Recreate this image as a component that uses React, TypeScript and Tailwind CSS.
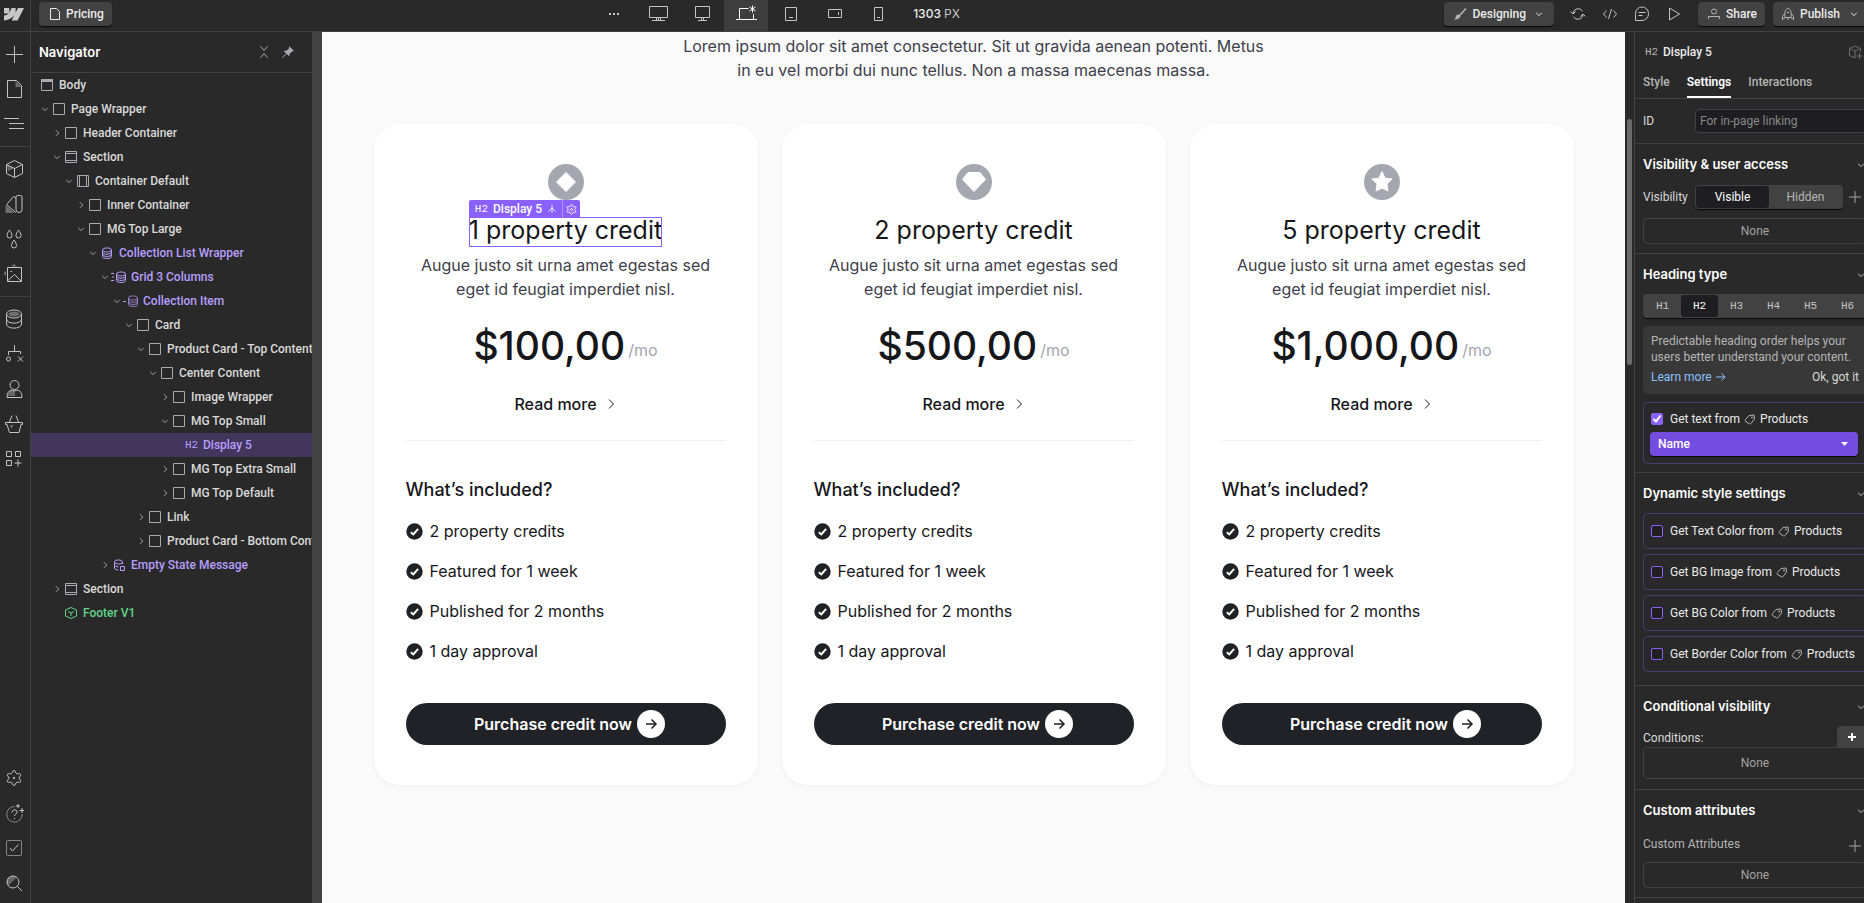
import React from 'react';
import clsx from 'clsx';

type IconProps = { size?: number; className?: string; children: React.ReactNode };

const Icon: React.FC<IconProps> = ({ size = 20, className, children }) => (
  <svg
    width={size}
    height={size}
    viewBox={`0 0 ${size} ${size}`}
    fill="none"
    stroke="currentColor"
    aria-hidden="true"
    className={clsx('shrink-0', className)}
  >
    {children}
  </svg>
);

const ChevronDown = ({ className }: { className?: string }) => (
  <Icon size={12} className={className}>
    <path d="M3.2 4.8 6 7.6l2.8-2.8" />
  </Icon>
);

const ChevronRight = ({ className }: { className?: string }) => (
  <Icon size={12} className={className}>
    <path d="M5 3.2 7.8 6 5 8.8" />
  </Icon>
);

const PageIcon = () => (
  <Icon size={16}>
    <path d="M3.5 2.5h6l3 3v8h-9z" />
  </Icon>
);

const GearPath = 'M10 2.5c1.6 0 1.5 2.6 2.6 3.2 1.1.6 3.2-.8 4 .6.8 1.4-1.6 2.4-1.6 3.7s2.4 2.3 1.6 3.7-2.9 0-4 .6c-1.1.6-1 3.2-2.6 3.2s-1.5-2.6-2.6-3.2c-1.1-.6-3.2.8-4-.6S5 11.3 5 10 2.6 7.7 3.4 6.3s2.9 0 4-.6S8.4 2.5 10 2.5z';

const railTop = [
  {
    label: 'Add elements',
    icon: <path d="M10.5 2v17M2 10.5h17" />,
  },
  {
    label: 'Pages',
    icon: (
      <>
        <path d="M3.5 1.5h9l5 5v12h-14z" />
        <path d="M11.5 2v6h6z" fill="currentColor" opacity=".45" stroke="none" />
      </>
    ),
  },
  {
    label: 'Navigator',
    icon: <path d="M0 4.5h15M5 9.5h15M5 14.5h15" />,
  },
];

const railMiddle = [
  {
    label: 'Components',
    icon: (
      <>
        <path d="m10.5 1.5 8 4v9l-8 4-8-4v-9zM2.5 5.5l8 4 8-4M10.5 9.5v9" />
        <path d="m3 6 7 3.5L4 12z" fill="currentColor" opacity=".4" stroke="none" />
      </>
    ),
  },
  {
    label: 'Variables',
    icon: (
      <>
        <path d="M13.5 1.5h3A1.5 1.5 0 0 1 18 3v12.5a3 3 0 0 1-6 0V3a1.5 1.5 0 0 1 1.5-1.5zM12 4 9.500 2.500l-6 7a1.5 1.5 0 0 0 0 2l8.500 7" />
        <path d="M1.5 10.500V19h9z" fill="currentColor" opacity=".45" stroke="none" />
      </>
    ),
  },
  {
    label: 'Style manager',
    icon: (
      <path d="M5.5 1c1.5 2.5 2.5 3.7 2.5 5.5a2.5 2.5 0 0 1-5 0C3 4.7 4 3.5 5.5 1zM14.5 1C16 3.5 17 4.7 17 6.5a2.5 2.5 0 0 1-5 0c0-1.8 1-3 2.5-5.5zM10 11c1.5 2.5 2.5 3.7 2.5 5.500a2.5 2.5 0 0 1-5 0c0-1.800 1-3 2.500-5.500z" />
    ),
  },
  {
    label: 'Assets',
    icon: (
      <>
        <path d="M3.5 3.5h14v14h-14zM4 16.5l6.5-6 6.5 6.5M6.5 7.5H8" />
        <path d="M7 2.5 10 0l3 2.5zM2 7v5L-.5 9.5z" fill="currentColor" opacity=".5" stroke="none" />
      </>
    ),
  },
];

const railLower = [
  {
    label: 'CMS',
    icon: (
      <>
        <ellipse cx="10" cy="5" rx="7.5" ry="4" />
        <ellipse cx="10" cy="5" rx="5.5" ry="2.5" fill="currentColor" opacity=".45" stroke="none" />
        <path d="M2.5 5v10c0 5.5 15 5.5 15 0V5M2.5 10c0 5.5 15 5.5 15 0" />
      </>
    ),
  },
  {
    label: 'Logic',
    icon: (
      <>
        <path d="M10.5 1v6M4.5 11V7.5h12V10M14 12.500l5 5M19 12.500l-5 5" />
        <circle cx="4.5" cy="15" r="2" />
      </>
    ),
  },
  {
    label: 'Users',
    icon: (
      <>
        <circle cx="10.5" cy="6" r="4.5" />
        <path d="M3 18.5c0-4 1.5-6.5 4-7.5 1.5 1 5.5 1 7 0 2.5 1 4 3.5 4 7.5z" />
        <path d="M4 17c0-3 1-4.5 3-5.5l4 .5v5z" fill="currentColor" opacity=".4" stroke="none" />
      </>
    ),
  },
  {
    label: 'Ecommerce',
    icon: (
      <>
        <path d="M1.5 8.500h17v2H17l-2 8H5.5l-2.500-8H1.5zM5.5 8 8 1.500M14.500 8 12 1.500" />
        <path d="M6 11h4l-3 4z" fill="currentColor" opacity=".4" stroke="none" />
      </>
    ),
  },
  {
    label: 'Apps',
    icon: <path d="M2.5 2.5h5v5h-5zM11.5 2.5h5v5h-5zM2.5 11.5h5v5h-5zM14 10.5v7M10.5 14h7" />,
  },
];

const railBottom = [
  {
    label: 'Site settings',
    icon: (
      <>
        <path d={GearPath} />
        <circle cx="10" cy="10" r=".7" fill="currentColor" />
      </>
    ),
  },
  {
    label: 'Help',
    icon: (
      <>
        <path d="M11 3.500A7.800 7.800 0 1 0 18.300 11" opacity=".6" />
        <path d="M8 9.500c0-3.500 5-3.500 5-.5 0 2-2.500 2-2.500 4M10.500 15v1.200M14 1v4M12 3h4M18 5v5M15.500 7.500h5" />
      </>
    ),
  },
  {
    label: 'Audit',
    icon: (
      <>
        <rect x="2.5" y="2.5" width="15" height="15" rx="1" opacity=".6" />
        <path d="m6 10 2.500 3 6-6.500" />
      </>
    ),
  },
  {
    label: 'Search',
    icon: (
      <>
        <circle cx="9" cy="9" r="6" />
        <path d="m13.500 13.500 4.500 4.500" />
        <path d="M4.500 12.500a5.500 5.500 0 0 1 8-8z" fill="currentColor" opacity=".4" stroke="none" />
      </>
    ),
  },
];

const RailGroup = ({ items }: { items: { label: string; icon: React.ReactNode }[] }) => (
  <>
    {items.map(item => (
      <button
        key={item.label}
        type="button"
        title={item.label}
        className="flex h-[35px] w-full items-center justify-center pr-[2px] text-[#c4c4c4]"
      >
        <Icon>{item.icon}</Icon>
      </button>
    ))}
  </>
);

type NodeKind =
  | 'body'
  | 'box'
  | 'section'
  | 'container'
  | 'list'
  | 'grid'
  | 'item'
  | 'heading'
  | 'empty'
  | 'component';

interface TreeNode {
  label: string;
  level: number;
  kind: NodeKind;
  state?: 'open' | 'closed';
}

const tree: TreeNode[] = [
  { label: 'Body', level: 0, kind: 'body' },
  { label: 'Page Wrapper', level: 1, kind: 'box', state: 'open' },
  { label: 'Header Container', level: 2, kind: 'box', state: 'closed' },
  { label: 'Section', level: 2, kind: 'section', state: 'open' },
  { label: 'Container Default', level: 3, kind: 'container', state: 'open' },
  { label: 'Inner Container', level: 4, kind: 'box', state: 'closed' },
  { label: 'MG Top Large', level: 4, kind: 'box', state: 'open' },
  { label: 'Collection List Wrapper', level: 5, kind: 'list', state: 'open' },
  { label: 'Grid 3 Columns', level: 6, kind: 'grid', state: 'open' },
  { label: 'Collection Item', level: 7, kind: 'item', state: 'open' },
  { label: 'Card', level: 8, kind: 'box', state: 'open' },
  { label: 'Product Card - Top Content', level: 9, kind: 'box', state: 'open' },
  { label: 'Center Content', level: 10, kind: 'box', state: 'open' },
  { label: 'Image Wrapper', level: 11, kind: 'box', state: 'closed' },
  { label: 'MG Top Small', level: 11, kind: 'box', state: 'open' },
  { label: 'Display 5', level: 12, kind: 'heading' },
  { label: 'MG Top Extra Small', level: 11, kind: 'box', state: 'closed' },
  { label: 'MG Top Default', level: 11, kind: 'box', state: 'closed' },
  { label: 'Link', level: 9, kind: 'box', state: 'closed' },
  { label: 'Product Card - Bottom Content', level: 9, kind: 'box', state: 'closed' },
  { label: 'Empty State Message', level: 6, kind: 'empty', state: 'closed' },
  { label: 'Section', level: 2, kind: 'section', state: 'closed' },
  { label: 'Footer V1', level: 2, kind: 'component' },
];

const database = (
  <path d="M1.500 3c0-2.700 9-2.700 9 0s-9 2.700-9 0v6.500c0 2.700 9 2.700 9 0V3M1.500 5.200c0 2.700 9 2.700 9 0M1.500 7.400c0 2.700 9 2.700 9 0" />
);

const nodeIcons: Record<Exclude<NodeKind, 'heading'>, React.ReactNode> = {
  body: (
    <>
      <path d="M.5.5h11v11H.5z" />
      <path d="M0 0h12v3H0z" fill="currentColor" stroke="none" />
    </>
  ),
  box: <path d="M.5.5h11v11H.5z" />,
  section: <path d="M.5.5h11v11H.5zM.5 2.500h11M.5 9.500h11" />,
  container: <path d="M.5.5h11v11H.5zM2.500.5v11M9.500.5v11" />,
  list: database,
  grid: (
    <>
      <g transform="translate(2)">{database}</g>
      <path d="M-2 2.500h3M-1 6h2M-2 9.500h3" />
    </>
  ),
  item: (
    <>
      <g transform="translate(2)" opacity=".7">
        {database}
      </g>
      <path d="M-2 6.500h3" />
    </>
  ),
  empty: (
    <>
      <path d="M1.500 3c0-2.700 8-2.700 8 0s-8 2.700-8 0v6c0 1.500 2 2 4 2M9.500 3v2M1.500 6c0 1.200 2 1.800 4 1.800" />
      <path d="M7.500 7.500h4v4h-4z" />
    </>
  ),
  component: <path d="m6 .5 5.500 2.500v6L6 11.500.5 9V3zM3 4.500 6 6l3-1.500M6 6v3" />,
};

const kindColor = (kind: NodeKind) => {
  if (kind === 'component') return 'text-[#63d489]';
  if (kind === 'box' || kind === 'body' || kind === 'section' || kind === 'container') return 'text-[#d9d9d9]';
  return 'text-[#b89eff]';
};

const TreeRow = ({ node }: { node: TreeNode }) => (
  <li className={node.kind === 'heading' ? 'bg-[#43365c]' : undefined}>
    <button
      type="button"
      className={clsx('flex h-6 w-full items-center text-xs font-medium', kindColor(node.kind))}
      style={{ paddingLeft: node.level * 12 - (node.level ? 4 : -10) }}
    >
      {node.level > 0 && (
        <span className="flex h-3 w-[14px] shrink-0 text-[#a3a3a3]">
          {node.state === 'open' && <ChevronDown />}
          {node.state === 'closed' && <ChevronRight />}
        </span>
      )}
      {node.kind === 'heading' ? (
        <span className="w-[18px] shrink-0 text-left font-['Liberation_Mono',monospace] text-[11px] font-normal">H2</span>
      ) : (
        <Icon
          size={12}
          className={clsx('mr-[6px] overflow-visible', kindColor(node.kind) === 'text-[#d9d9d9]' && 'text-[#a9a9b0]')}
        >
          {nodeIcons[node.kind]}
        </Icon>
      )}
      <span className="whitespace-nowrap">{node.label}</span>
    </button>
  </li>
);

const Navigator = () => (
  <nav className="flex w-[281px] shrink-0 flex-col overflow-hidden" aria-label="Navigator">
    <div className="flex h-[41px] items-center border-b border-[#424242] px-2">
      <h2 className="flex-1 pt-px font-['Inter',sans-serif] text-[13px] font-semibold text-white">Navigator</h2>
      <button type="button" title="Collapse all" className="mr-2 text-[#b5b5b5]">
        <Icon size={16}>
          <path d="m4.500 2.500 3.500 4 3.500-4M4.500 13.500l3.500-4 3.500 4" />
        </Icon>
      </button>
      <button type="button" title="Pin" className="mr-2 text-[#a9a9b0]">
        <Icon size={16}>
          <path d="M9 2 14 7l-2 .5L9.500 10v2.500l-6-5.500L6.500 6.500 9 4.500z" fill="currentColor" stroke="none" />
          <path d="m6.500 9.500-4 4" />
        </Icon>
      </button>
    </div>
    <ul>
      {tree.map((node, i) => (
        <TreeRow key={i} node={node} />
      ))}
    </ul>
  </nav>
);

const devices = [
  {
    label: 'Large desktop',
    icon: <path d="M1.500 3.500h18v11h-18zM8.500 14.500v3M12.500 14.500v3M10.500 14.500v3M4 17.500h13" />,
  },
  {
    label: 'Desktop',
    icon: <path d="M3.500 3.500h14v11h-14zM9.500 14.500v3M11.500 14.500v3M6 17.500h9" />,
  },
  {
    label: 'Base breakpoint',
    icon: (
      <>
        <path d="M3.500 16V5.500h9M17.500 11v5M0 16.500h21" />
        <path d="M16.500 2.500v7M13.500 4l6 4M19.500 4l-6 4" />
      </>
    ),
  },
  {
    label: 'Tablet',
    icon: <path d="M5.500 4.500h11v13h-11zM9 14.500h4" />,
  },
  {
    label: 'Mobile landscape',
    icon: <path d="M4.500 6.500h13v8h-13zM14.500 9v3" />,
  },
  {
    label: 'Mobile portrait',
    icon: <path d="M6.500 4.500h8v13h-8zM9 14.500h3" />,
  },
];

const barButton =
  'flex h-6 items-center rounded-[4px] bg-[#424242] text-xs font-medium text-[#ebebeb] shadow-[0_1px_1px_rgba(0,0,0,0.8)]';

const TopBar = () => (
  <header className="flex h-8 shrink-0 items-start justify-between overflow-hidden border-b border-[#424242]">
    <div className="flex">
      <a
        href="#"
        aria-label="Dashboard"
        className="flex h-[31px] w-[31px] shrink-0 items-center border-r border-[#424242] pb-[3px] pl-1 text-[#c8c8c8]"
      >
        <svg width="20" height="13" viewBox="0 0 20 13" fill="currentColor" aria-hidden="true">
          <path d="M20 0 13.600 12.500h-6l2.700-5.200h-.1C8 10.200 4.600 12.100 0 12.500V7.400s3-.2 4.700-2H0V0h5.300v4.400h.1L7.600 0h4v4.400h.1L14 0z" />
        </svg>
      </a>
      <div className="flex pt-[2px] pl-2">
        <button type="button" className={clsx(barButton, 'gap-[3px] px-2')}>
          <PageIcon />
          Pricing
        </button>
      </div>
    </div>
    <div className="flex h-[31px] items-center">
      <button
        type="button"
        title="More breakpoints"
        className="flex h-full w-11 items-center justify-center pb-1 text-[#c4c4c4]"
      >
        <Icon size={12}>
          <path d="M1 6h2M5 6h2M9 6h2" strokeWidth="2" />
        </Icon>
      </button>
      {devices.map(device => (
        <button
          key={device.label}
          type="button"
          title={device.label}
          className={clsx(
            'flex h-full w-11 items-center justify-center pb-1',
            device.label === 'Base breakpoint' ? 'bg-[#3d3d3d] text-white' : 'text-[#c4c4c4]'
          )}
        >
          <Icon size={21}>{device.icon}</Icon>
        </button>
      ))}
      <p className="w-16 pb-1 pl-[13px] font-['Inter',sans-serif] text-xs font-medium whitespace-nowrap text-[#ebebeb]">
        1303 <span className="font-normal text-[#c4c4c4]">PX</span>
      </p>
    </div>
    <div className="flex pt-[2px]">
      <button type="button" className={clsx(barButton, 'mr-2 pr-[9px] pl-2')}>
        <Icon size={16} className="mr-1 text-[#b5b5b5]">
          <path d="m14 2.500-6 6.500" strokeWidth="1.500" />
          <path d="M8.500 9.500C8.500 12 6 13.500 2 13.500c1.500-1 1.500-2 2-3.500s3.500-2 4.500-.5z" fill="currentColor" stroke="none" />
        </Icon>
        Designing
        <ChevronDown className="ml-[7px]" />
      </button>
      <div className="mr-2 flex h-6 items-center text-[#c4c4c4]">
        <button type="button" title="Sync" className="flex w-8 justify-center">
          <Icon size={16}>
            <path d="M3 7.500A5.200 5.200 0 0 1 12.500 5M13 8.500A5.200 5.200 0 0 1 3.500 11M.5 5.500 3 8l2.500-2.500M10.500 10.500 13 8l2.500 2.500" />
          </Icon>
        </button>
        <button type="button" title="Export code" className="flex w-8 justify-center">
          <Icon size={16}>
            <path d="M4.500 4.500 1.500 8l3 3.500M11.500 4.500l3 3.500-3 3.500M9.500 3l-3 10" />
          </Icon>
        </button>
        <button type="button" title="Comments" className="flex w-8 justify-center">
          <Icon size={16}>
            <path d="M1.500 14.500V7.500a6.500 6.500 0 0 1 13 0 6.500 6.500 0 0 1-6.500 7zM4.500 6.500h7M4.500 9.500h4" />
          </Icon>
        </button>
        <button type="button" title="Preview" className="flex w-8 justify-center">
          <Icon size={16}>
            <path d="M3.500 2v12l10-6z" />
          </Icon>
        </button>
      </div>
      <button type="button" className={clsx(barButton, 'mr-2 gap-1 px-2')}>
        <Icon size={16} className="text-[#b5b5b5]">
          <circle cx="8" cy="5.500" r="2.500" />
          <path d="M2.500 13v-2.500h11V13" />
        </Icon>
        Share
      </button>
      <button type="button" className={clsx(barButton, 'w-[91px] gap-1 rounded-r-none pr-1 pl-[7px]')}>
        <Icon size={16} className="text-[#b5b5b5]">
          <path d="M5 11.500C4 7 5.500 3.500 8 2c2.500 1.500 4 5 3 9.500zM4.500 8 2.500 10.500v3l3-2M11.500 8l2 2.500v3l-3-2M7 6.500h2M8 11.500V14" />
        </Icon>
        Publish
        <ChevronDown className="ml-1" />
      </button>
    </div>
  </header>
);

const CardShape = ({ shape }: { shape: Plan['shape'] }) => (
  <svg width="36" height="36" viewBox="0 0 36 36" aria-hidden="true">
    <circle cx="18" cy="18" r="18" fill="#a5a6b0" />
    <g fill="#fff" stroke="#fff" strokeLinejoin="round">
      {shape === 'diamond' && <path d="m18 8.500 9.500 9.500-9.500 9.500L8.500 18z" />}
      {shape === 'gem' && <path d="M12 8.500h12l5.500 7L18 27.500 6.500 15.500z" />}
      {shape === 'star' && (
        <path d="m18 7.500 3 6.600 7.200.8-5.200 5 1 7.100-6-3-6 3 1-7.100-5.200-5 7.200-.8z" />
      )}
    </g>
  </svg>
);

interface Plan {
  name: string;
  price: string;
  shape: 'diamond' | 'gem' | 'star';
}

const plans: Plan[] = [
  { name: '1 property credit', price: '$100,00', shape: 'diamond' },
  { name: '2 property credit', price: '$500,00', shape: 'gem' },
  { name: '5 property credit', price: '$1,000,00', shape: 'star' },
];

const features = ['2 property credits', 'Featured for 1 week', 'Published for 2 months', '1 day approval'];

const SelectionTag = () => (
  <span className="absolute bottom-full -left-px flex h-[18px] items-center rounded-t-[2px] bg-[#8a61ff] font-['Roboto',sans-serif] text-xs leading-none font-medium whitespace-nowrap text-white">
    <span className="pr-[5px] pl-[6px] font-['Liberation_Mono',monospace] text-[11px] font-normal">H2</span>
    Display 5
    <Icon size={12} className="mx-1">
      <path d="M6 2v8M6 5 2.500 8.500M6 5l3.500 3.500" opacity=".85" />
    </Icon>
    <span className="flex h-full items-center border-l border-white/30 px-[2px]">
      <svg width="13" height="13" viewBox="0 0 20 20" fill="none" stroke="currentColor" strokeWidth="1.5" aria-hidden="true">
        <path d={GearPath} />
        <circle cx="10" cy="10" r="1.500" />
      </svg>
    </span>
  </span>
);

const PlanCard = ({ plan, selected }: { plan: Plan; selected: boolean }) => (
  <article className="rounded-[26px] bg-white px-8 py-10 text-[#16171a] shadow-[0_2px_6px_rgba(20,20,43,0.04)]">
    <div className="flex flex-col items-center text-center">
      <CardShape shape={plan.shape} />
      <h2 className="relative mt-[17px] pb-1 text-[25px] leading-[26px] whitespace-nowrap">
        {plan.name}
        {selected && (
          <span className="absolute inset-0 border border-[#8a61ff]">
            <SelectionTag />
          </span>
        )}
      </h2>
      <p className="mt-[6px] max-w-[310px] text-base leading-6 text-[#3d3f4a]">
        Augue justo sit urna amet egestas sed eget id feugiat imperdiet nisl.
      </p>
      <p className="mt-[21px] flex items-end gap-[3px] text-[39px] leading-[48px] font-medium">
        {plan.price}
        <span className="pb-2 text-base leading-6 font-normal text-[#a5a6b0]">/mo</span>
      </p>
      <a href="#" className="mt-[22px] flex items-center gap-2 text-base leading-6 font-medium">
        Read more
        <Icon size={12}>
          <path d="M4 1.500 8.500 6 4 10.500" />
        </Icon>
      </a>
    </div>
    <hr className="mt-6 border-[#eeeff2]" />
    <h3 className="mt-[37px] text-lg leading-6 font-medium">What’s included?</h3>
    <ul className="mt-[17px] flex flex-col gap-4">
      {features.map(feature => (
        <li key={feature} className="flex items-center gap-[7px] text-base leading-6">
          <svg width="17" height="17" viewBox="0 0 17 17" fill="none" aria-hidden="true">
            <circle cx="8.500" cy="8.500" r="8.200" fill="#212227" />
            <path d="m4.800 9.200 2.500 2.200 4.800-5.500" stroke="#fff" strokeWidth="2" />
          </svg>
          {feature}
        </li>
      ))}
    </ul>
    <button
      type="button"
      className="mt-10 flex h-[42px] w-full items-center justify-center gap-[5px] rounded-full bg-[#212227] pl-2 text-base font-semibold text-white"
    >
      Purchase credit now
      <span className="flex size-7 items-center justify-center rounded-full bg-white text-[#212227]">
        <Icon size={14}>
          <path d="M2 7h10M7.500 2.500 12 7l-4.500 4.500" strokeWidth="1.500" />
        </Icon>
      </span>
    </button>
  </article>
);

const Canvas = () => (
  <main className="min-w-0 flex-1 overflow-hidden bg-[#fafafa] px-8 pt-[2px] font-['Inter',sans-serif]">
    <p className="mx-auto max-w-[590px] text-center text-base leading-6 text-[#3d3f4a]">
      Lorem ipsum dolor sit amet consectetur. Sit ut gravida aenean potenti. Metus in eu vel morbi dui nunc tellus. Non a
      massa maecenas massa.
    </p>
    <div className="mx-auto mt-[42px] grid max-w-[1200px] grid-cols-3 gap-6">
      {plans.map((plan, i) => (
        <PlanCard key={plan.name} plan={plan} selected={i === 0} />
      ))}
    </div>
  </main>
);

const Section = ({ title, className, children }: { title: string; className: string; children: React.ReactNode }) => (
  <section className={clsx('border-b border-[#424242] px-2', className)}>
    <h3 className="flex h-10 items-center justify-between pt-[2px] font-['Inter',sans-serif] text-[13px] font-semibold text-white">
      {title}
      <ChevronDown className="text-[#c4c4c4]" />
    </h3>
    {children}
  </section>
);

const EmptyBox = ({ className }: { className: string }) => (
  <div className={clsx('flex items-center justify-center rounded-[4px] border border-[#424242] text-xs text-[#a3a3a3]', className)}>
    None
  </div>
);

const PlusIcon = () => (
  <Icon size={12}>
    <path d="M6 0v12M0 6h12" />
  </Icon>
);

const TagIcon = () => (
  <Icon size={12} className="mx-1 text-[#b5b5b5]">
    <path d="M1.500 6.500 5 2.500l5-.5.500 4L7 10.500c-.7.700-1.500.500-2 0L1.500 8.500c-.5-.5-.5-1.300 0-2z" />
    <circle cx="8" cy="4.500" r=".6" />
  </Icon>
);

const BindCheck = ({ field, checked }: { field: string; checked?: boolean }) => (
  <label className="flex items-center text-xs whitespace-nowrap text-[#ebebeb]">
    <span className="relative mr-[7px] flex size-3">
      <input
        type="checkbox"
        defaultChecked={checked}
        className="size-3 appearance-none rounded-[2px] border border-[#8a61ff] bg-[#1f1f22] checked:bg-[#8a61ff]"
      />
      {checked && (
        <Icon size={12} className="pointer-events-none absolute inset-0 text-white">
          <path d="M2.500 6 5 8.500l4.500-6" strokeWidth="2" />
        </Icon>
      )}
    </span>
    {field}
    <TagIcon />
    Products
  </label>
);

const segment = 'flex flex-1 items-center justify-center rounded-[3px]';

const SettingsPanel = () => (
  <aside className="w-[230px] shrink-0 overflow-hidden border-l border-[#424242]">
    {/* The panel content is wider than the window edge lets through */}
    <div className="w-60">
      <div className="flex h-10 items-center pr-2 pl-[10px] text-xs font-medium text-[#ebebeb]">
        <span className="w-[18px] font-['Liberation_Mono',monospace] text-[11px] font-normal text-[#b5b5b5]">H2</span>
        <span className="flex-1">Display 5</span>
        <Icon size={16} className="mr-1 text-[#6e6e6e]">
          <path d="M8 14 2.500 11.500v-7L8 2l5.500 2.500V8M2.500 4.500 8 7l5.500-2.500M8 7v7M9.500 12h6M12.500 9v6" />
        </Icon>
      </div>
      <div role="tablist" className="flex h-[27px] gap-[17px] border-b border-[#424242] px-2 text-xs font-medium text-[#b5b5b5]">
        <button type="button" role="tab" className="flex items-start pt-[2px]">Style</button>
        <button
          type="button"
          role="tab"
          aria-selected="true"
          className="flex items-start border-b-2 border-white pt-[2px] font-semibold text-white"
        >
          Settings
        </button>
        <button type="button" role="tab" className="flex items-start pt-[2px]">Interactions</button>
      </div>
      <div className="flex h-[45px] items-center border-b border-[#424242] pl-2 text-xs text-[#d9d9d9]">
        <label htmlFor="element-id" className="w-[52px]">ID</label>
        <input
          id="element-id"
          type="text"
          placeholder="For in-page linking"
          className="h-6 w-[172px] rounded-[4px] border border-[#424242] bg-[#1e1e22] px-1 text-xs placeholder:text-[#8a8a8a]"
        />
      </div>

      <Section title="Visibility & user access" className="pb-[9px]">
        <div className="flex items-center pt-[1px] text-xs text-[#d9d9d9]">
          <span className="w-[52px]">Visibility</span>
          <div className="flex h-6 w-[148px] rounded-[4px] bg-[#424242] p-px shadow-[0_1px_1px_rgba(0,0,0,0.8)]">
            <button type="button" className={clsx(segment, 'bg-[#1e1e22] text-white')}>Visible</button>
            <button type="button" className={clsx(segment, 'text-[#b5b5b5]')}>Hidden</button>
          </div>
          <button type="button" title="Add rule" className="ml-[6px] text-[#a3a3a3]">
            <PlusIcon />
          </button>
        </div>
        <EmptyBox className="mt-[9px] h-[26px]" />
      </Section>

      <Section title="Heading type" className="pb-2">
        <div className="flex h-6 rounded-[4px] bg-[#424242] p-px shadow-[0_1px_1px_rgba(0,0,0,0.8)]">
          {['H1', 'H2', 'H3', 'H4', 'H5', 'H6'].map(tag => (
            <button
              key={tag}
              type="button"
              className={clsx(
                segment,
                "font-['Liberation_Mono',monospace] text-[11px]",
                tag === 'H2' ? 'bg-[#1e1e22] text-white' : 'text-[#c4c4c4]'
              )}
            >
              {tag}
            </button>
          ))}
        </div>
        <div className="mt-2 rounded-[4px] bg-[#383838] px-2 pt-[7px] pb-[9px] text-xs leading-4 text-[#b5b5b5]">
          <p className="whitespace-nowrap">
            Predictable heading order helps your
            <br />
            users better understand your content.
          </p>
          <div className="mt-1 flex justify-between">
            <a href="#" className="flex items-center gap-1 text-[#8ac2ff]">
              Learn more
              <Icon size={10}>
                <path d="M0 5h9M5.500 1.500 9 5 5.500 8.500" />
              </Icon>
            </a>
            <button type="button" className="text-[#d9d9d9]">Ok, got it</button>
          </div>
        </div>
        <div className="mt-2 rounded-[4px] border border-[#483a73] px-[6px] pt-2 pb-[7px]">
          <div className="pl-[1px]">
            <BindCheck field="Get text from" checked />
          </div>
          <div className="relative mt-[5px]">
            <select
              aria-label="Bound field"
              className="block h-6 w-[208px] appearance-none rounded-[4px] bg-[#734ce0] px-2 text-xs font-medium text-white shadow-[0_1px_1px_rgba(0,0,0,0.8)]"
            >
              <option>Name</option>
            </select>
            <svg width="8" height="4" viewBox="0 0 8 4" fill="#fff" aria-hidden="true" className="pointer-events-none absolute top-[10px] right-[11px]">
              <path d="M0 0h7L3.500 4z" />
            </svg>
          </div>
        </div>
      </Section>

      <Section title="Dynamic style settings" className="pb-[13px]">
        <div className="flex flex-col gap-[5px]">
          {['Get Text Color from', 'Get BG Image from', 'Get BG Color from', 'Get Border Color from'].map(field => (
            <div key={field} className="flex h-9 items-center rounded-[4px] border border-[#483a73] pl-[7px]">
              <BindCheck field={field} />
            </div>
          ))}
        </div>
      </Section>

      <Section title="Conditional visibility" className="pb-[10px]">
        <div className="flex h-[21px] items-end justify-between text-xs text-[#d9d9d9]">
          <span className="pb-px">Conditions:</span>
          <button
            type="button"
            title="Add condition"
            className="flex h-[21px] w-[30px] items-center justify-center rounded-t-[4px] bg-[#424242] text-white"
          >
            <Icon size={8}>
              <path d="M4 0v8M0 4h8" strokeWidth="2" />
            </Icon>
          </button>
        </div>
        <EmptyBox className="h-8" />
      </Section>

      <Section title="Custom attributes" className="pb-[9px]">
        <div className="flex h-8 items-center justify-between pr-[6px] text-xs text-[#b5b5b5]">
          <span className="pb-1">Custom Attributes</span>
          <button type="button" title="Add attribute" className="text-[#a3a3a3]">
            <PlusIcon />
          </button>
        </div>
        <EmptyBox className="h-[26px]" />
      </Section>
    </div>
  </aside>
);

export default function App() {
  return (
    <div className="flex h-screen flex-col overflow-hidden bg-[#292929] font-['Roboto',sans-serif]">
      <TopBar />
      <div className="flex min-h-0 flex-1">
        <div className="flex w-[31px] shrink-0 flex-col border-r border-[#424242] pt-1 pb-[3px]">
          <RailGroup items={railTop} />
          <hr className="mt-[5px] mb-1 border-[#424242]" />
          <RailGroup items={railMiddle} />
          <hr className="mt-[5px] mb-1 border-[#424242]" />
          <RailGroup items={railLower} />
          <div className="flex-1" />
          <RailGroup items={railBottom} />
        </div>
        <Navigator />
        <div className="w-[10px] shrink-0 bg-[#424242]" />
        <Canvas />
        {/* Canvas scrollbar */}
        <div className="w-[9px] shrink-0 px-[2px] pt-[87px]">
          <div className="h-[246px] rounded-full bg-[#6b6b6b]" />
        </div>
        <SettingsPanel />
      </div>
    </div>
  );
}
